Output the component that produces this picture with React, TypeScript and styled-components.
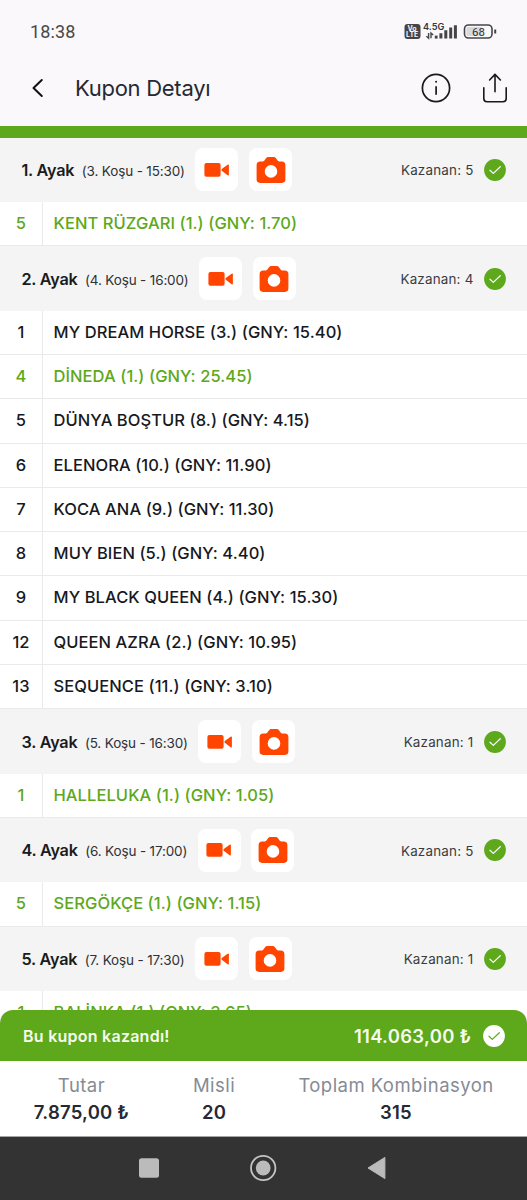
import React from "react";
import styled, { createGlobalStyle } from "styled-components";

const GREEN = "#5da81b";
const ORANGE = "#ff4500";

const GlobalStyle = createGlobalStyle`
  * { box-sizing: border-box; }
  body { margin: 0; background: #fff; font-family: Inter, sans-serif; }
`;

const Screen = styled.div`
  display: flex;
  flex-direction: column;
  width: 527px;
  height: 1200px;
  overflow: hidden;
  background: #fff;
`;

const StatusBar = styled.div`
  flex: none;
  display: flex;
  align-items: center;
  justify-content: space-between;
  height: 62px;
  padding: 1px 30px 0;
  background: #faf8fa;
  color: #48484b;
`;

const Clock = styled.span`
  font: 400 18px/24px Roboto, sans-serif;
  letter-spacing: 0.15px;
`;

const TopBar = styled.header`
  flex: none;
  display: flex;
  align-items: center;
  height: 64px;
  padding: 0 19px 13px 29px;
  background: #faf8fa;
`;

const Title = styled.h1`
  flex: 1;
  margin: 0 0 0 28px;
  color: #252932;
  font-size: 22px;
  font-weight: 400;
  line-height: 28px;
  letter-spacing: -0.28px;
`;

const TopActions = styled.div`
  display: flex;
  align-items: center;
  gap: 31.5px;
`;

const Stripe = styled.div`
  flex: none;
  height: 11.8px;
  background: ${GREEN};
`;

const Legs = styled.main`
  flex: 1;
  min-height: 0;
  overflow: hidden;
`;

const LegHeader = styled.div`
  display: flex;
  align-items: center;
  height: 64.3px;
  padding: 0 21px 0 21.5px;
  background: #f4f4f4;
`;

const LegName = styled.span`
  color: #191b20;
  font-size: 16.2px;
  font-weight: 600;
  letter-spacing: -0.22px;
  white-space: nowrap;
`;

const LegRace = styled.span`
  margin: 2px 10.5px 0 7.5px;
  color: #303134;
  font-size: 13.5px;
  letter-spacing: -0.15px;
  white-space: nowrap;
`;

const MediaButton = styled.button`
  display: grid;
  place-items: center;
  width: 43px;
  height: 43px;
  margin-right: 10.7px;
  padding: 0;
  border: 0;
  border-radius: 8px;
  background: #fff;
`;

const Winner = styled.span`
  margin: 1px 10.5px 0 auto;
  color: #3a3b3e;
  font-size: 13.4px;
  letter-spacing: 0.2px;
  white-space: nowrap;
`;

const HorseRow = styled.div<{ $won?: boolean }>`
  display: flex;
  height: 44.3px;
  border-bottom: 1px solid #eaeaea;
  color: ${(p) => (p.$won ? GREEN : "#17191e")};
  background: #fff;
  font-size: 16.5px;
  font-weight: 500;
  line-height: 43.6px;
  letter-spacing: 0.07px;
  white-space: nowrap;
`;

const HorseNumber = styled.span`
  width: 43px;
  border-right: 1px solid #eaeaea;
  text-align: center;
`;

const HorseName = styled.span`
  padding-left: 10.5px;
`;

const Summary = styled.section`
  flex: none;
  position: relative;
  height: 127px;
  margin-top: -16px;
  background: #fff;
  border-radius: 14px 14px 0 0;
`;

const WinBar = styled.div`
  display: flex;
  align-items: center;
  height: 51px;
  padding: 0 22px 0 23px;
  border-radius: 13px 13px 0 0;
  background: ${GREEN};
  color: #f5fbef;
`;

const WinText = styled.span`
  font-size: 16px;
  font-weight: 600;
  letter-spacing: 0.25px;
`;

const WinAmount = styled.span`
  margin: 0 11.5px 0 auto;
  font-size: 18.5px;
  font-weight: 600;
  letter-spacing: 0.28px;
`;

const Totals = styled.div`
  display: grid;
  grid-template-columns: 163px 102px 262px;
  height: 76px;
  padding-top: 12px;
  border-bottom: 1px solid #a5a5a5;
  text-align: center;
  white-space: nowrap;
`;

const TotalLabel = styled.div`
  color: #858b95;
  font-size: 18.5px;
  line-height: 25px;
  letter-spacing: 0.45px;
`;

const TotalValue = styled.div`
  color: #252a32;
  font-size: 18.5px;
  font-weight: 600;
  line-height: 28px;
  letter-spacing: 0.2px;
`;

const NavBar = styled.nav`
  flex: none;
  display: flex;
  align-items: center;
  justify-content: space-between;
  height: 63px;
  padding: 0 140px 1px 138px;
  background: #333;
`;

function StatusIcons() {
  return (
    <svg width="94" height="22" viewBox="0 0 94 22" style={{ marginRight: -1 }}>
      <rect x="0.5" y="3" width="16" height="15" rx="3" fill="#454548" />
      <text fill="#faf8fa" fontFamily="Inter, sans-serif" fontWeight="700" fontSize="7">
        <tspan x="3.4" y="9.7">Vo</tspan>
        <tspan x="2.1" y="16.2">LTE</tspan>
      </text>
      <text x="19" y="9" fontFamily="Inter, sans-serif" fontWeight="600" fontSize="9.2" fill="#38383b">4.5G</text>
      <g stroke="#454548" fill="none">
        <path d="M24.6 12v5.2l-2.2-2M27 17.2V12l2.2 2" strokeWidth="1.4" />
        <path d="M32.2 14.6v3" strokeWidth="2.8" />
        <path d="M36.9 12.3v5.3M41.8 9.3v8.3M46.7 6.6v11M51.4 4.3v13.3" strokeWidth="3" />
      </g>
      <rect x="60.5" y="4" width="27.5" height="13" rx="4" fill="none" stroke="#454548" strokeWidth="1.6" />
      <rect x="62.5" y="6" width="16" height="9" rx="1.5" fill="#d9d8da" />
      <path d="M91.2 8.5v4" stroke="#454548" strokeWidth="2" />
      <text x="68" y="14.6" fontFamily="Roboto, sans-serif" fontSize="11.5" fontWeight="400" fill="#333336">68</text>
    </svg>
  );
}

function VideoIcon() {
  return (
    <svg width="26" height="16" viewBox="0 0 26 16" fill={ORANGE}>
      <rect x="0.4" y="1.1" width="16.2" height="13.7" rx="2" />
      <path d="M17.8 7.1L23.6 2.7Q24.9 2 24.9 3.2v9.6q0 1.2-1.3.5L17.8 8.7Q16.9 7.9 17.8 7.1Z" />
    </svg>
  );
}

function CameraIcon() {
  return (
    <svg width="30" height="28" viewBox="0 0 30 28">
      <path
        fill={ORANGE}
        fillRule="evenodd"
        d="M4.2 5.6h2.6Q7.6 5.6 8.2 4.8L10.2 2Q11 .9 12.2 .9h5.6q1.2 0 2 1.1l2 2.8q.6.8 1.4.8h2.6q3.6 0 3.6 3.6v14.4q0 3.3-3.6 3.3H4.2q-3.6 0-3.6-3.3V9.2Q.6 5.6 4.2 5.6ZM15 9.1a6.3 6.3 0 1 0 0 12.6a6.3 6.3 0 1 0 0-12.6Z"
      />
    </svg>
  );
}

function CheckBadge({ fill, mark }: { fill: string; mark: string }) {
  return (
    <svg width="22" height="22" viewBox="0 0 22 22">
      <circle cx="11" cy="11" r="10.9" fill={fill} />
      <path d="M6 11.2l3.3 3.2 7-6.7" fill="none" stroke={mark} strokeWidth="1.2" strokeLinecap="round" strokeLinejoin="round" />
    </svg>
  );
}

interface Horse {
  no: number;
  text: string;
  won?: boolean;
}

interface Leg {
  name: string;
  race: string;
  winner: number;
  horses: Horse[];
}

const legs: Leg[] = [
  { name: "1. Ayak", race: "(3. Koşu - 15:30)", winner: 5, horses: [{ no: 5, text: "KENT RÜZGARI (1.) (GNY: 1.70)", won: true }] },
  {
    name: "2. Ayak",
    race: "(4. Koşu - 16:00)",
    winner: 4,
    horses: [
      { no: 1, text: "MY DREAM HORSE (3.) (GNY: 15.40)" },
      { no: 4, text: "DİNEDA (1.) (GNY: 25.45)", won: true },
      { no: 5, text: "DÜNYA BOŞTUR (8.) (GNY: 4.15)" },
      { no: 6, text: "ELENORA (10.) (GNY: 11.90)" },
      { no: 7, text: "KOCA ANA (9.) (GNY: 11.30)" },
      { no: 8, text: "MUY BIEN (5.) (GNY: 4.40)" },
      { no: 9, text: "MY BLACK QUEEN (4.) (GNY: 15.30)" },
      { no: 12, text: "QUEEN AZRA (2.) (GNY: 10.95)" },
      { no: 13, text: "SEQUENCE (11.) (GNY: 3.10)" },
    ],
  },
  { name: "3. Ayak", race: "(5. Koşu - 16:30)", winner: 1, horses: [{ no: 1, text: "HALLELUKA (1.) (GNY: 1.05)", won: true }] },
  { name: "4. Ayak", race: "(6. Koşu - 17:00)", winner: 5, horses: [{ no: 5, text: "SERGÖKÇE (1.) (GNY: 1.15)", won: true }] },
  { name: "5. Ayak", race: "(7. Koşu - 17:30)", winner: 1, horses: [{ no: 1, text: "BALİNKA (1.) (GNY: 3.65)", won: true }] },
];

const totals = [
  { label: "Tutar", value: "7.875,00 ₺" },
  { label: "Misli", value: "20" },
  { label: "Toplam Kombinasyon", value: "315" },
];

export default function App() {
  return (
    <Screen>
      <GlobalStyle />
      <StatusBar>
        <Clock>18:38</Clock>
        <StatusIcons />
      </StatusBar>
      <TopBar>
        <svg width="18" height="22" viewBox="0 0 18 22">
          <path d="M12.8 3L4.5 11l8.3 8" fill="none" stroke="#111" strokeWidth="2" strokeLinecap="round" strokeLinejoin="round" />
        </svg>
        <Title>Kupon Detayı</Title>
        <TopActions>
          <svg width="30" height="30" viewBox="0 0 30 30" fill="none" stroke="#18191b" strokeWidth="1.7">
            <circle cx="15" cy="15" r="13.6" />
            <path d="M15.1 13.2v8.6" />
            <circle cx="15.1" cy="8.8" r="1" fill="#18191b" stroke="none" />
          </svg>
          <svg width="26" height="30" viewBox="0 0 26 30" fill="none" stroke="#18191b" strokeWidth="1.6" strokeLinecap="round" strokeLinejoin="round">
            <path d="M1.8 14.7v10.8q0 3.2 3.2 3.2h16q3.2 0 3.2-3.2V14.7" />
            <path d="M13 18.7V1.4M7.6 7L13 1.4 18.4 7" />
          </svg>
        </TopActions>
      </TopBar>
      <Stripe />
      <Legs>
        {legs.map((leg) => (
          <section key={leg.name}>
            <LegHeader>
              <LegName>{leg.name}</LegName>
              <LegRace>{leg.race}</LegRace>
              <MediaButton aria-label="Video"><VideoIcon /></MediaButton>
              <MediaButton aria-label="Foto"><CameraIcon /></MediaButton>
              <Winner>Kazanan: {leg.winner}</Winner>
              <CheckBadge fill={GREEN} mark="#fff" />
            </LegHeader>
            {leg.horses.map((horse) => (
              <HorseRow key={horse.no} $won={horse.won}>
                <HorseNumber>{horse.no}</HorseNumber>
                <HorseName>{horse.text}</HorseName>
              </HorseRow>
            ))}
          </section>
        ))}
      </Legs>
      <Summary>
        <WinBar>
          <WinText>Bu kupon kazandı!</WinText>
          <WinAmount>114.063,00 ₺</WinAmount>
          <CheckBadge fill="#fff" mark={GREEN} />
        </WinBar>
        <Totals>
          {totals.map((t) => (
            <div key={t.label}>
              <TotalLabel>{t.label}</TotalLabel>
              <TotalValue>{t.value}</TotalValue>
            </div>
          ))}
        </Totals>
      </Summary>
      <NavBar>
        <svg width="22" height="22" viewBox="0 0 22 22">
          <rect x="1" y="1.3" width="20" height="19.5" rx="2.5" fill="#bbb" />
        </svg>
        <svg width="28" height="28" viewBox="0 0 28 28">
          <circle cx="13.2" cy="14" r="12.2" fill="none" stroke="#c4c4c4" strokeWidth="1.8" />
          <circle cx="13.2" cy="14" r="7.4" fill="#bbb" />
        </svg>
        <svg width="20" height="24" viewBox="0 0 20 24">
          <path d="M17.9 1.4v21.2L1 12Z" fill="#bbb" stroke="#bbb" strokeLinejoin="round" />
        </svg>
      </NavBar>
    </Screen>
  );
}
